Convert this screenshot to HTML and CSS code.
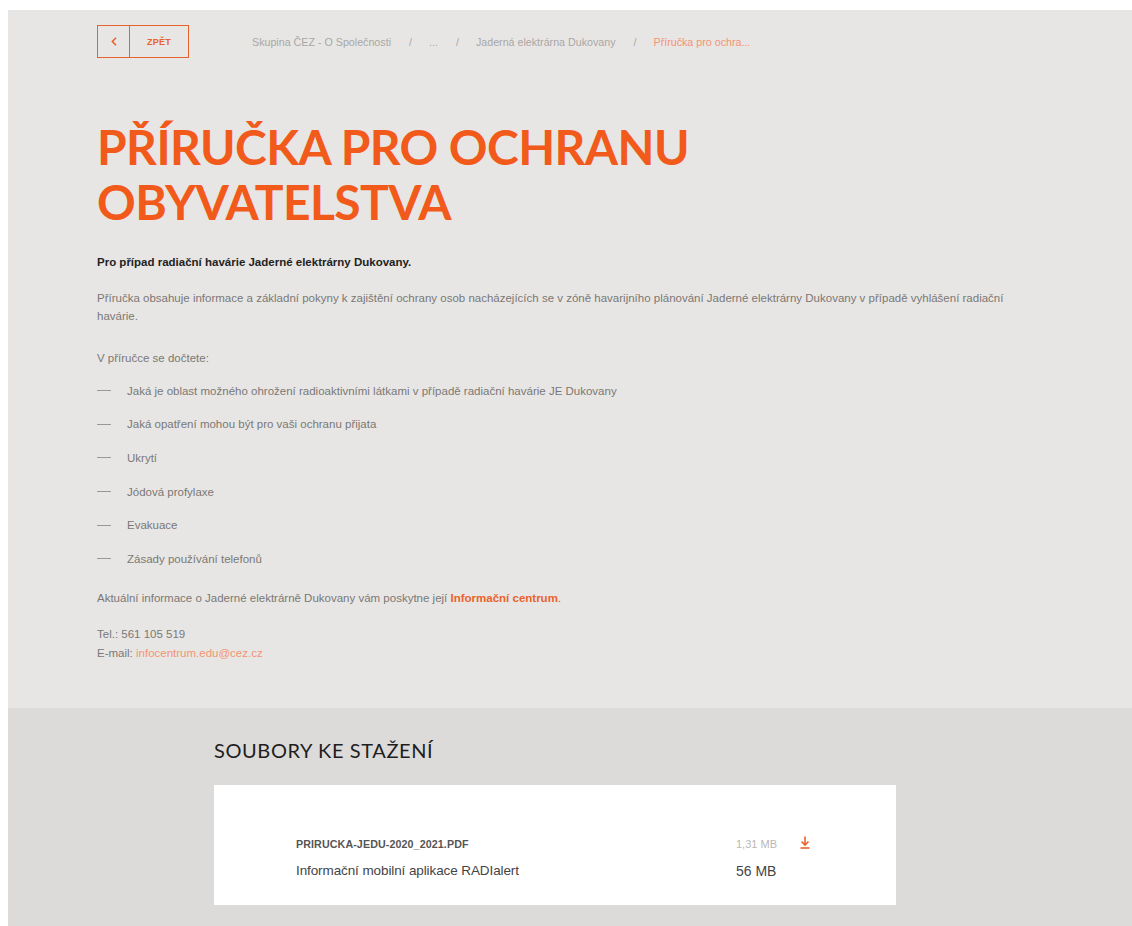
FILE: index.html
```html
<!DOCTYPE html>
<html lang="cs">
<head>
<meta charset="utf-8">
<title>Příručka pro ochranu obyvatelstva</title>
<link rel="stylesheet" href="styles.css">
</head>
<body>
<div class="page">
  <section class="hero">
    <div class="topbar">
      <a class="back" href="#">
        <span class="back-arrow">
          <svg width="6" height="9" viewBox="0 0 6 9" fill="none" stroke="#e8632b" stroke-width="1.6">
            <path d="M5 0.8L1.4 4.5L5 8.2"/>
          </svg>
        </span>
        <span class="back-label">ZPĚT</span>
      </a>
      <nav class="crumbs">
        <a href="#">Skupina ČEZ - O Společnosti</a>
        <span class="sep">/</span>
        <a href="#">...</a>
        <span class="sep">/</span>
        <a href="#">Jaderná elektrárna Dukovany</a>
        <span class="sep">/</span>
        <span class="current">Příručka pro ochra...</span>
      </nav>
    </div>

    <h1 class="title"><span class="title-line">PŘÍRUČKA PRO OCHRANU</span><span class="title-line">OBYVATELSTVA</span></h1>

    <p class="lead">Pro případ radiační havárie Jaderné elektrárny Dukovany.</p>
    <p class="text">Příručka obsahuje informace a základní pokyny k zajištění ochrany osob nacházejících se v zóně havarijního plánování Jaderné elektrárny Dukovany v případě vyhlášení radiační havárie.</p>
    <p class="text intro">V příručce se dočtete:</p>
    <ul class="dash-list">
      <li>Jaká je oblast možného ohrožení radioaktivními látkami v případě radiační havárie JE Dukovany</li>
      <li>Jaká opatření mohou být pro vaši ochranu přijata</li>
      <li>Ukrytí</li>
      <li>Jódová profylaxe</li>
      <li>Evakuace</li>
      <li>Zásady používání telefonů</li>
    </ul>
    <p class="text after-list">Aktuální informace o Jaderné elektrárně Dukovany vám poskytne její <a class="strong-link" href="#">Informační centrum</a>.</p>
    <p class="text contact">Tel.: 561 105 519<br>E-mail: <a class="mail" href="#">infocentrum.edu@cez.cz</a></p>
  </section>

  <section class="downloads">
    <h2 class="downloads-title">SOUBORY KE STAŽENÍ</h2>
    <div class="file-card">
      <div class="file-row">
        <span class="file-name">PRIRUCKA-JEDU-2020_2021.PDF</span>
        <span class="file-size light">1,31 MB</span>
        <a class="file-get" href="#" aria-label="Stáhnout">
          <svg width="10" height="13" viewBox="0 0 10 13" fill="none" stroke="#e8632b" stroke-width="1.6">
            <path d="M5 0.5V9"/>
            <path d="M1.5 5.5L5 9L8.5 5.5"/>
            <path d="M0.5 12H9.5"/>
          </svg>
        </a>
      </div>
      <div class="file-row">
        <span class="file-desc">Informační mobilní aplikace RADIalert</span>
        <span class="file-size dark">56 MB</span>
      </div>
    </div>
  </section>
</div>
</body>
</html>
```

FILE: styles.css
```css
html, body {
  margin: 0;
  padding: 0;
  background: #ffffff;
}

body {
  font-family: "Liberation Sans", Arial, sans-serif;
  color: #777;
}

a {
  text-decoration: none;
}

.page {
  margin: 10px 0 0 8px;
  background: #e8e6e4;
  height: 916px;
  display: flex;
  flex-direction: column;
}

/* ---------- hero ---------- */
.hero {
  padding: 15px 0 0 89px;
  height: 698px;
  box-sizing: border-box;
}

.topbar {
  display: flex;
  align-items: center;
  height: 33px;
}

.back {
  display: flex;
  width: 92px;
  height: 33px;
  box-sizing: border-box;
  border: 1px solid #e8632b;
  color: #e8632b;
}

.back-arrow {
  width: 31px;
  border-right: 1px solid #e8632b;
  display: flex;
  align-items: center;
  justify-content: center;
}

.back-label {
  flex: 1;
  display: flex;
  align-items: center;
  justify-content: center;
  font-size: 9px;
  font-weight: 700;
  letter-spacing: 0.3px;
}

.crumbs {
  margin-left: 63px;
  display: flex;
  align-items: center;
  font-size: 10.7px;
  color: #a9a7a5;
}

.crumbs a {
  color: #a9a7a5;
}

.crumbs .sep {
  margin: 0 17px 0 18px;
}

.crumbs .current {
  color: #f29473;
}

.title {
  margin: 61px 0 0;
  font-family: "Lato", sans-serif;
  font-weight: 700;
  font-size: 48px;
  line-height: 55px;
  letter-spacing: -0.6px;
  color: #f15a1a;
}

.title-line {
  display: block;
  height: 55px;
}

.lead {
  margin: 24px 0 0;
  font-size: 11.5px;
  line-height: 18px;
  font-weight: 700;
  color: #222;
}

.text {
  margin: 18px 0 0;
  font-size: 11.5px;
  line-height: 18px;
  color: #7a7876;
  max-width: 920px;
}

.text.intro {
  margin-top: 24px;
}

.dash-list {
  list-style: none;
  margin: 7px 0 0;
  padding: 0;
}

.dash-list li {
  display: flex;
  align-items: center;
  font-size: 11.5px;
  line-height: 18px;
  height: 33.6px;
  color: #7a7876;
}

.dash-list li::before {
  content: "";
  width: 14px;
  height: 1px;
  background: #9a9896;
  margin-right: 16px;
}

.text.after-list {
  margin-top: 13px;
}

.strong-link {
  color: #e8632b;
  font-weight: 700;
}

.contact {
  margin-top: 18px;
  line-height: 19px;
}

.mail {
  color: #f29473;
}

/* ---------- downloads ---------- */
.downloads {
  flex: 1;
  background: #dcdbda;
  padding: 31px 0 0 206px;
}

.downloads-title {
  margin: 0;
  font-family: "Lato", sans-serif;
  font-weight: 400;
  font-size: 20px;
  line-height: 22px;
  letter-spacing: 0.6px;
  color: #1e1e1e;
}

.file-card {
  margin-top: 24px;
  width: 682px;
  height: 120px;
  box-sizing: border-box;
  background: #ffffff;
  padding: 45px 0 0 82px;
}

.file-row {
  display: flex;
  align-items: center;
  height: 27px;
}

.file-name {
  width: 440px;
  font-size: 10.7px;
  font-weight: 700;
  color: #555;
  letter-spacing: 0.1px;
}

.file-desc {
  width: 440px;
  font-size: 13.5px;
  color: #444;
  letter-spacing: -0.1px;
}

.file-size {
  width: 64px;
}

.file-size.light {
  font-size: 11px;
  color: #b9b7b5;
}

.file-size.dark {
  font-size: 14px;
  color: #444;
}

.file-get {
  display: flex;
  align-items: center;
  padding-bottom: 2px;
}
```
